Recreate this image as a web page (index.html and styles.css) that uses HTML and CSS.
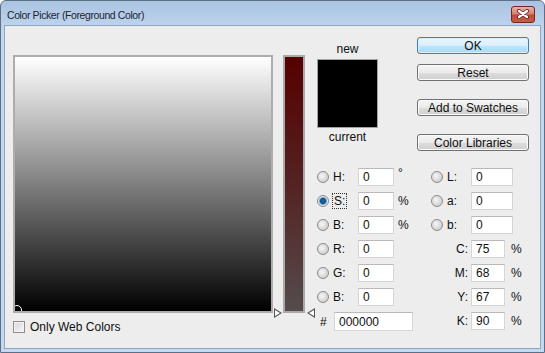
FILE: index.html
```html
<!DOCTYPE html>
<html lang="en">
<head>
  <meta charset="UTF-8" />
  <title>Color Picker (Foreground Color)</title>
  <link rel="stylesheet" href="styles.css">
</head>
<body>
  <div class="window">
    <!-- Title bar -->
    <div class="titlebar">
      <span class="title">Color Picker (Foreground Color)</span>
      <button class="close">
        <svg width="14" height="10" viewBox="0 0 14 10">
          <path d="M3 2 L11 8 M11 2 L3 8" stroke="#5a2a24" stroke-width="4" stroke-linecap="round" fill="none"/>
          <path d="M3 2 L11 8 M11 2 L3 8" stroke="#fff" stroke-width="2.2" stroke-linecap="round" fill="none"/>
        </svg>
      </button>
    </div>

    <div class="content">
      <!-- Colour field -->
      <div class="picker">
        <div class="field"><span class="marker"></span></div>
        <label class="check"><span class="box"></span>Only Web Colors</label>
      </div>

      <!-- Saturation slider -->
      <div class="slider">
        <span class="arrow arrow-left"></span>
        <span class="arrow arrow-right"></span>
      </div>

      <!-- Right panel -->
      <div class="panel">
        <div class="top">
          <div class="preview">
            <div class="cap">new</div>
            <div class="swatch"></div>
            <div class="cap">current</div>
          </div>
          <div class="buttons">
            <button class="btn btn-ok">OK</button>
            <button class="btn btn-reset">Reset</button>
            <button class="btn btn-add">Add to Swatches</button>
            <button class="btn btn-lib">Color Libraries</button>
          </div>
        </div>

        <div class="fields">
          <div class="group group-left">
            <div class="row"><span class="radio"></span><span class="lbl">H:</span><input value="0"><span class="unit deg">°</span></div>
            <div class="row"><span class="radio checked"></span><span class="lbl"><span class="focus">S:</span></span><input value="0"><span class="unit">%</span></div>
            <div class="row"><span class="radio"></span><span class="lbl">B:</span><input value="0"><span class="unit">%</span></div>
            <div class="row row-break"><span class="radio"></span><span class="lbl">R:</span><input value="0"></div>
            <div class="row"><span class="radio"></span><span class="lbl">G:</span><input value="0"></div>
            <div class="row"><span class="radio"></span><span class="lbl">B:</span><input value="0"></div>
            <div class="row row-break hex"><span class="hash">#</span><input value="000000"></div>
          </div>

          <div class="group group-right">
            <div class="row"><span class="radio"></span><span class="lbl">L:</span><input value="0"></div>
            <div class="row"><span class="radio"></span><span class="lbl">a:</span><input value="0"></div>
            <div class="row"><span class="radio"></span><span class="lbl">b:</span><input value="0"></div>
            <div class="row row-break cmyk"><span class="lbl">C:</span><input value="75"><span class="unit">%</span></div>
            <div class="row cmyk"><span class="lbl">M:</span><input value="68"><span class="unit">%</span></div>
            <div class="row cmyk"><span class="lbl">Y:</span><input value="67"><span class="unit">%</span></div>
            <div class="row cmyk"><span class="lbl">K:</span><input value="90"><span class="unit">%</span></div>
          </div>
        </div>
      </div>
    </div>
  </div>
</body>
</html>
```

FILE: styles.css
```css
* {
  box-sizing: border-box;
}

body {
  margin: 0;
  font-family: "Liberation Sans", Arial, sans-serif;
  font-size: 12px;
  color: #0f0f0f;
  background: #fff;
}

.window {
  width: 545px;
  height: 353px;
  border: 1px solid #5d6f86;
  border-radius: 6px 6px 0 0;
  padding: 0 3px 3px;
  background: linear-gradient(#a9c3e1, #c3d7ee 30px, #c4d8ee);
  display: flex;
  flex-direction: column;
}

/* Title bar */

.titlebar {
  height: 24px;
  display: flex;
  align-items: center;
  justify-content: space-between;
  padding: 0 6px 0 3px;
}

.title {
  font-size: 10.5px;
  letter-spacing: -0.4px;
  color: #1a2433;
  padding-top: 4px;
}

.close {
  width: 24px;
  height: 17px;
  margin-top: 2px;
  padding: 0;
  border: 1px solid #6e2a22;
  border-radius: 3px;
  background: linear-gradient(#eab0a4, #d6826f 45%, #c24a36 55%, #c95b45);
  display: flex;
  align-items: center;
  justify-content: center;
}

/* Dialog body */

.content {
  flex: 1;
  border: 1px solid #8ea6c4;
  background: #ededed;
  display: flex;
  padding: 11px 0 0 8px;
}

.picker {
  margin-top: 18px;
  width: 260px;
}

.field {
  position: relative;
  overflow: hidden;
  width: 260px;
  height: 258px;
  border: 2px solid #adadad;
  background: linear-gradient(#ffffff, #000000);
}

.marker {
  position: absolute;
  left: -3px;
  bottom: -4px;
  width: 10px;
  height: 10px;
  border: 1px solid #fff;
  border-radius: 50%;
}

.check {
  display: flex;
  align-items: center;
  margin-top: 8px;
  height: 12px;
}

.box {
  width: 12px;
  height: 12px;
  margin-right: 5px;
  border: 1px solid #8f8f8f;
  background: linear-gradient(135deg, #d8d8d8, #f4f4f4);
  box-shadow: inset 0 0 0 1px #f4f4f4;
}

.slider {
  position: relative;
  margin: 18px 0 0 10px;
  width: 22px;
  height: 258px;
  border: 2px solid #a9a9a9;
  background: linear-gradient(#560000, #552222 50%, #554c4c);
}

.arrow {
  position: absolute;
  top: 251px;
  width: 9px;
  height: 10px;
}

.arrow::before,
.arrow::after {
  content: "";
  position: absolute;
  top: 0;
  border-top: 5px solid transparent;
  border-bottom: 5px solid transparent;
}

.arrow-left {
  left: -12px;
}

.arrow-left::before {
  left: 1px;
  border-left: 8px solid #555;
}

.arrow-left::after {
  left: 2px;
  top: 1.5px;
  border-top-width: 3.5px;
  border-bottom-width: 3.5px;
  border-left: 5px solid #fff;
}

.arrow-right {
  left: 21px;
}

.arrow-right::before {
  right: 0;
  border-right: 8px solid #555;
}

.arrow-right::after {
  right: 1px;
  top: 1.5px;
  border-top-width: 3.5px;
  border-bottom-width: 3.5px;
  border-right: 5px solid #fff;
}

/* Right panel */

.panel {
  margin-left: 12px;
  width: 212px;
}

.top {
  display: flex;
}

.preview {
  width: 61px;
}

.cap {
  height: 14px;
  line-height: 14px;
  text-align: center;
}

.preview .cap:first-child {
  margin-top: 5px;
  margin-bottom: 3px;
}

.preview .cap:last-child {
  margin-top: 2px;
}

.swatch {
  width: 61px;
  height: 69px;
  border: 1px solid #a3a3a3;
  background: #000;
}

.buttons {
  margin-left: 39px;
  width: 112px;
  display: flex;
  flex-direction: column;
}

.btn {
  height: 17px;
  padding: 0;
  font-family: inherit;
  font-size: 12px;
  color: #0f0f0f;
  border: 1px solid #707070;
  border-radius: 3px;
  background: linear-gradient(#f4f4f4, #ebebeb 50%, #dddddd 51%, #cfcfcf);
  box-shadow: inset 0 0 0 1px #fbfbfb;
}

.btn-ok {
  border-color: #3c7fb1;
  background: linear-gradient(#eaf6fd, #d9f0fc 50%, #bee6fd 51%, #a7d9f5);
  box-shadow: inset 0 0 0 1px #d8f0fb;
}

.btn-reset {
  margin-top: 10px;
}

.btn-add,
.btn-lib {
  margin-top: 18px;
}

/* Value fields */

.fields {
  display: flex;
  margin-top: 17px;
}

.group-left {
  width: 114px;
}

.row {
  display: flex;
  align-items: center;
  height: 18px;
  margin-bottom: 6px;
}

.row-break {
  margin-top: 4px;
}

.radio {
  width: 12px;
  height: 12px;
  margin-right: 4px;
  border: 1px solid #8b8b8b;
  border-radius: 50%;
  background: radial-gradient(circle at 40% 40%, #f6f6f6, #d2d2d2 70%, #c4c4c4);
}

.radio.checked {
  background: radial-gradient(circle, #1d6db0 0, #0e4d85 2.5px, #6aa9d8 3.5px, #e8e8e8 4.5px, #cfcfcf);
}

.lbl {
  width: 25px;
}

.focus {
  outline: 1px dotted #333;
  outline-offset: 0;
  padding: 0 1px;
}

input {
  width: 36px;
  height: 18px;
  padding: 0 4px;
  font-family: inherit;
  font-size: 12px;
  color: #0f0f0f;
  background: #fff;
  border: 1px solid #d5d5d5;
  border-top-color: #b9b9b9;
  border-radius: 0;
}

.unit {
  margin-left: 4px;
}

.deg {
  align-self: flex-start;
  margin-top: -2px;
}

.hex {
  height: 19px;
}

.hash {
  width: 17px;
  padding-left: 3px;
}

.hex input {
  width: 79px;
  height: 19px;
}

.group-right .lbl {
  width: 24px;
}

.group-right input {
  width: 42px;
}

.cmyk .lbl {
  width: 40px;
  text-align: right;
  padding-right: 3px;
}

.group-right .cmyk input {
  width: 34px;
}

.cmyk .unit {
  margin-left: 6px;
}
```
